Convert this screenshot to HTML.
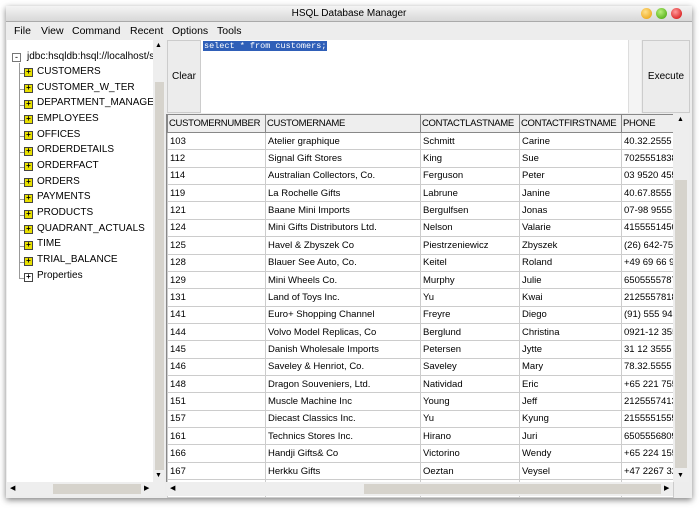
<!DOCTYPE html><html><head><style>
*{box-sizing:border-box}
body{margin:0;width:700px;height:508px;background:#fff;font-family:"Liberation Sans",sans-serif;font-size:10px;position:relative;overflow:hidden;color:#000}
.a{position:absolute}
.win{left:6px;top:6px;width:686px;height:492px;background:#ededed;box-shadow:0 2px 6px rgba(0,0,0,.5)}
.title{left:6px;top:6px;width:686px;height:16px;background:linear-gradient(#f4f4f4,#d8d8d8);border-bottom:1px solid #aaa;text-align:center;font-size:10px;line-height:16px}
.dot{width:11px;height:11px;border-radius:50%;top:8px}
.menu{left:6px;top:22px;width:686px;height:17px;background:#ededed}
.menu span{position:absolute;top:3px;font-size:10.5px}
.tree{left:7px;top:40px;width:146px;height:442px;background:#fff;overflow:hidden}
.ti{position:absolute;left:30px;font-size:10px;white-space:nowrap}
.ic{position:absolute;left:17px;width:9px;height:9px;background:#e8e000;border:1px solid #444;font-size:8px;line-height:6px;text-align:center;font-weight:bold}
.ln{position:absolute;left:12px;width:5px;border-top:1px solid #999}
.vs{background:#d6d3cc}
.btn{background:#ececec;border:1px solid #ccc;text-align:center;font-size:10px}
table{border-collapse:collapse;position:absolute;left:167px;top:114px;table-layout:fixed;width:506px}
td{height:17.37px;border:1px solid #ccc;padding:0 0 0 2px;white-space:nowrap;overflow:hidden;font-size:9.5px;background:#fff}
tr.h td{height:18px;background:#eee;border-color:#888;font-size:9.5px;letter-spacing:-0.3px;padding-left:1px}
</style></head><body>
<div class="a win"></div>
<div class="a title">HSQL Database Manager</div>
<div class="a dot" style="left:641px;background:radial-gradient(circle at 40% 35%,#ffe08a,#e89a00)"></div>
<div class="a dot" style="left:656px;background:radial-gradient(circle at 40% 35%,#b8f07a,#3ca000)"></div>
<div class="a dot" style="left:671px;background:radial-gradient(circle at 40% 35%,#ff9a9a,#d00000)"></div>
<div class="a menu"><span style="left:8px">File</span><span style="left:35px">View</span><span style="left:66px">Command</span><span style="left:124px">Recent</span><span style="left:166px">Options</span><span style="left:211px">Tools</span></div>
<div class="a tree">
<div class="a" style="left:5px;top:13px;width:9px;height:9px;border:1px solid #777;font-size:9px;line-height:6px;text-align:center">-</div>
<div class="ti" style="left:20px;top:11px">jdbc:hsqldb:hsql://localhost/s</div>
<div class="a" style="left:12px;top:23px;height:216px;border-left:1px solid #999"></div>
<div class="ln" style="top:33px"></div><div class="ic" style="top:28px">+</div><div class="ti" style="top:26px">CUSTOMERS</div>
<div class="ln" style="top:49px"></div><div class="ic" style="top:44px">+</div><div class="ti" style="top:42px">CUSTOMER_W_TER</div>
<div class="ln" style="top:65px"></div><div class="ic" style="top:60px">+</div><div class="ti" style="top:57px">DEPARTMENT_MANAGERS</div>
<div class="ln" style="top:80px"></div><div class="ic" style="top:75px">+</div><div class="ti" style="top:73px">EMPLOYEES</div>
<div class="ln" style="top:96px"></div><div class="ic" style="top:91px">+</div><div class="ti" style="top:89px">OFFICES</div>
<div class="ln" style="top:112px"></div><div class="ic" style="top:107px">+</div><div class="ti" style="top:104px">ORDERDETAILS</div>
<div class="ln" style="top:127px"></div><div class="ic" style="top:122px">+</div><div class="ti" style="top:120px">ORDERFACT</div>
<div class="ln" style="top:143px"></div><div class="ic" style="top:138px">+</div><div class="ti" style="top:136px">ORDERS</div>
<div class="ln" style="top:159px"></div><div class="ic" style="top:154px">+</div><div class="ti" style="top:151px">PAYMENTS</div>
<div class="ln" style="top:175px"></div><div class="ic" style="top:170px">+</div><div class="ti" style="top:167px">PRODUCTS</div>
<div class="ln" style="top:190px"></div><div class="ic" style="top:185px">+</div><div class="ti" style="top:183px">QUADRANT_ACTUALS</div>
<div class="ln" style="top:206px"></div><div class="ic" style="top:201px">+</div><div class="ti" style="top:198px">TIME</div>
<div class="ln" style="top:222px"></div><div class="ic" style="top:217px">+</div><div class="ti" style="top:214px">TRIAL_BALANCE</div>
<div class="ln" style="top:238px"></div><div class="ic" style="top:233px;background:#fff">+</div><div class="ti" style="top:230px">Properties</div>
</div>
<div class="a" style="left:153px;top:40px;width:12px;height:442px;background:#eee"></div>
<div class="a vs" style="left:155px;top:82px;width:9px;height:388px"></div>
<div class="a" style="left:155px;top:42px;font-size:7px">▲</div><div class="a" style="left:155px;top:472px;font-size:7px">▼</div>
<div class="a btn" style="left:167px;top:40px;width:34px;height:73px;line-height:71px">Clear</div>
<div class="a" style="left:201px;top:40px;width:440px;height:73px;background:#fff"></div>
<div class="a" style="left:203px;top:41px;background:#2f5fb8;color:#fff;font-family:'Liberation Mono',monospace;font-size:8.5px;padding:0 1px">select * from customers;</div>
<div class="a" style="left:628px;top:40px;width:13px;height:73px;background:#f4f4f4;border-left:1px solid #ddd"></div>
<div class="a btn" style="left:642px;top:40px;width:48px;height:73px;line-height:71px">Execute</div>
<table>
<colgroup><col style="width:98px"><col style="width:155px"><col style="width:99px"><col style="width:102px"><col style="width:52px"></colgroup>
<tr class="h"><td>CUSTOMERNUMBER</td><td>CUSTOMERNAME</td><td>CONTACTLASTNAME</td><td>CONTACTFIRSTNAME</td><td>PHONE</td></tr>
<tr><td>103</td><td>Atelier graphique</td><td>Schmitt</td><td>Carine</td><td>40.32.2555</td></tr>
<tr><td>112</td><td>Signal Gift Stores</td><td>King</td><td>Sue</td><td>7025551838</td></tr>
<tr><td>114</td><td>Australian Collectors, Co.</td><td>Ferguson</td><td>Peter</td><td>03 9520 4555</td></tr>
<tr><td>119</td><td>La Rochelle Gifts</td><td>Labrune</td><td>Janine</td><td>40.67.8555</td></tr>
<tr><td>121</td><td>Baane Mini Imports</td><td>Bergulfsen</td><td>Jonas</td><td>07-98 9555</td></tr>
<tr><td>124</td><td>Mini Gifts Distributors Ltd.</td><td>Nelson</td><td>Valarie</td><td>4155551450</td></tr>
<tr><td>125</td><td>Havel &amp; Zbyszek Co</td><td>Piestrzeniewicz</td><td>Zbyszek</td><td>(26) 642-7555</td></tr>
<tr><td>128</td><td>Blauer See Auto, Co.</td><td>Keitel</td><td>Roland</td><td>+49 69 66 90</td></tr>
<tr><td>129</td><td>Mini Wheels Co.</td><td>Murphy</td><td>Julie</td><td>6505555787</td></tr>
<tr><td>131</td><td>Land of Toys Inc.</td><td>Yu</td><td>Kwai</td><td>2125557818</td></tr>
<tr><td>141</td><td>Euro+ Shopping Channel</td><td>Freyre</td><td>Diego</td><td>(91) 555 94</td></tr>
<tr><td>144</td><td>Volvo Model Replicas, Co</td><td>Berglund</td><td>Christina</td><td>0921-12 3555</td></tr>
<tr><td>145</td><td>Danish Wholesale Imports</td><td>Petersen</td><td>Jytte</td><td>31 12 3555</td></tr>
<tr><td>146</td><td>Saveley &amp; Henriot, Co.</td><td>Saveley</td><td>Mary</td><td>78.32.5555</td></tr>
<tr><td>148</td><td>Dragon Souveniers, Ltd.</td><td>Natividad</td><td>Eric</td><td>+65 221 7555</td></tr>
<tr><td>151</td><td>Muscle Machine Inc</td><td>Young</td><td>Jeff</td><td>2125557413</td></tr>
<tr><td>157</td><td>Diecast Classics Inc.</td><td>Yu</td><td>Kyung</td><td>2155551555</td></tr>
<tr><td>161</td><td>Technics Stores Inc.</td><td>Hirano</td><td>Juri</td><td>6505556809</td></tr>
<tr><td>166</td><td>Handji Gifts&amp; Co</td><td>Victorino</td><td>Wendy</td><td>+65 224 1555</td></tr>
<tr><td>167</td><td>Herkku Gifts</td><td>Oeztan</td><td>Veysel</td><td>+47 2267 3215</td></tr>
<tr><td></td><td></td><td></td><td></td><td></td></tr>
</table>
<div class="a" style="left:166px;top:114px;width:1px;height:368px;background:#888"></div>
<div class="a" style="left:673px;top:114px;width:16px;height:368px;background:#eee"></div>
<div class="a vs" style="left:675px;top:180px;width:12px;height:288px"></div>
<div class="a" style="left:677px;top:116px;font-size:7px">▲</div><div class="a" style="left:677px;top:472px;font-size:7px">▼</div>
<div class="a" style="left:7px;top:482px;width:158px;height:14px;background:#eee"></div>
<div class="a vs" style="left:53px;top:484px;width:88px;height:10px"></div>
<div class="a" style="left:10px;top:484px;font-size:7px">◀</div><div class="a" style="left:144px;top:484px;font-size:7px">▶</div>
<div class="a" style="left:167px;top:482px;width:506px;height:14px;background:#eee"></div>
<div class="a vs" style="left:364px;top:484px;width:297px;height:10px"></div>
<div class="a" style="left:170px;top:484px;font-size:7px">◀</div><div class="a" style="left:664px;top:484px;font-size:7px">▶</div>
</body></html>
